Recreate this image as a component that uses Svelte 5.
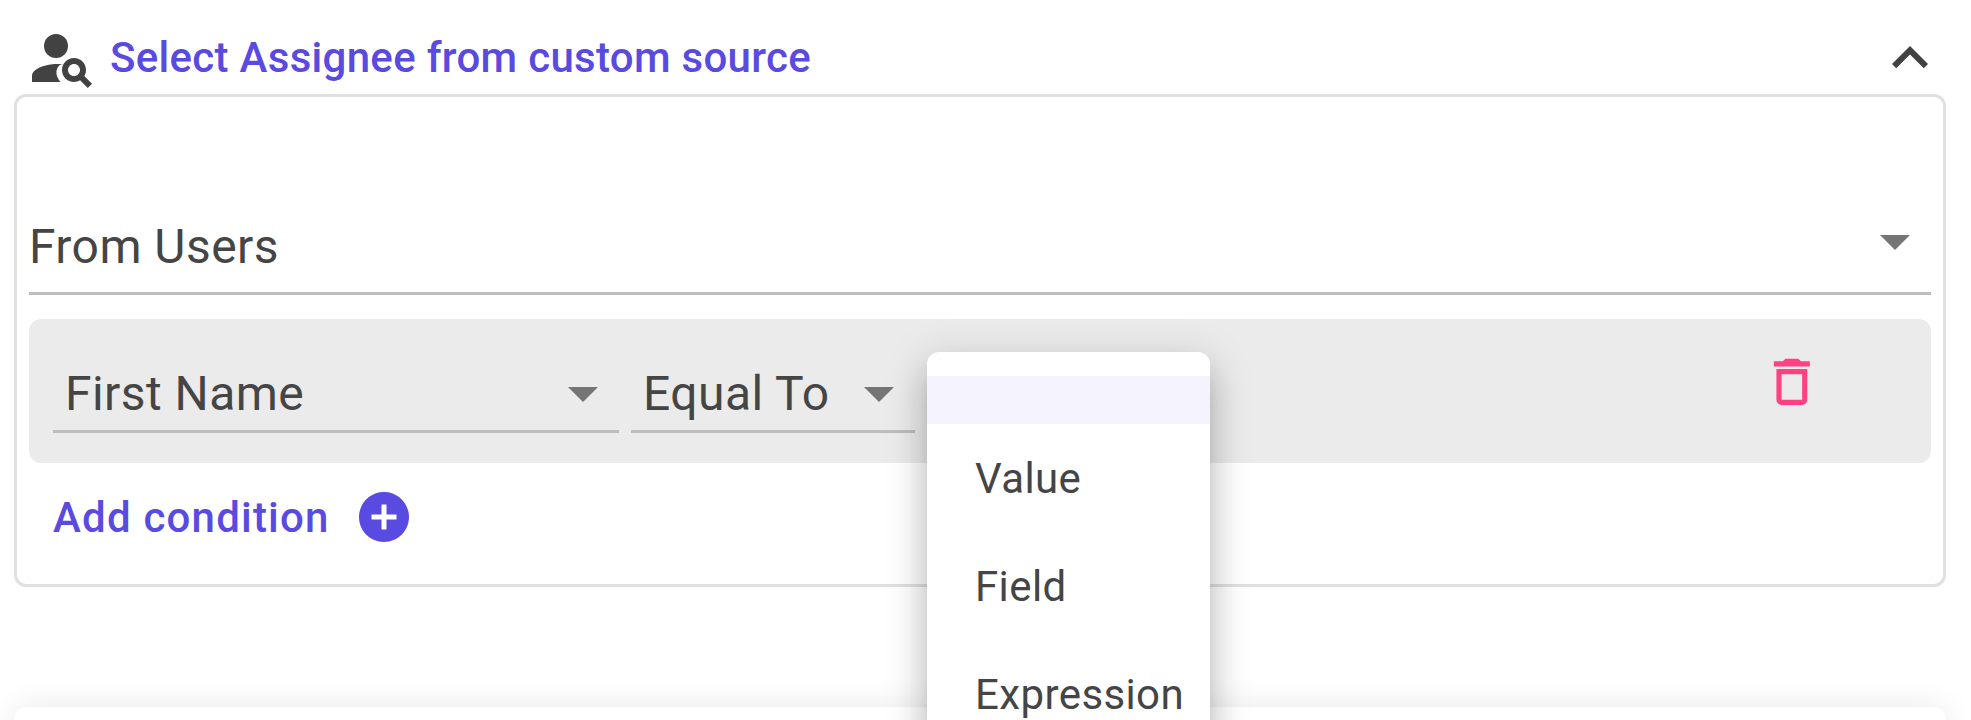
<script lang="ts">
	const options = ['Value', 'Field', 'Expression'];
	const arrowPath = 'M7 10l5 5 5-5z';
</script>

<div class="page">
	<header class="head">
		<svg class="icon" viewBox="0 0 24 24" aria-hidden="true">
			<circle cx="10" cy="8" r="4" />
			<path d="M10.35 14.01C7.62 13.91 2 15.27 2 18v2h9.54c-2.47-2.76-1.23-5.89.81-5.99z" />
			<path d="M19.43 18.02c.36-.59.57-1.28.57-2.02 0-2.21-1.79-4-4-4s-4 1.79-4 4 1.79 4 4 4c.74 0 1.43-.22 2.02-.57L20.59 22 22 20.59l-2.57-2.57zM16 18c-1.1 0-2-.9-2-2s.9-2 2-2 2 .9 2 2-.9 2-2 2z" />
		</svg>
		<h2>Select Assignee from custom source</h2>
		<svg class="icon chevron" viewBox="0 0 24 24" aria-hidden="true">
			<path d="M12 8l-6 6 1.41 1.41L12 10.83l4.59 4.58L18 14z" />
		</svg>
	</header>

	<section class="panel">
		<div class="select source">
			<span>From Users</span>
			<svg class="icon arrow" viewBox="0 0 24 24" aria-hidden="true"><path d={arrowPath} /></svg>
		</div>

		<div class="condition">
			<div class="select field">
				<span>First Name</span>
				<svg class="icon arrow" viewBox="0 0 24 24" aria-hidden="true"><path d={arrowPath} /></svg>
			</div>
			<div class="select operator">
				<span>Equal To</span>
				<svg class="icon arrow" viewBox="0 0 24 24" aria-hidden="true"><path d={arrowPath} /></svg>
			</div>
			<svg class="trash" viewBox="0 0 24 24" aria-hidden="true">
				<path d="M6 19c0 1.1.9 2 2 2h8c1.1 0 2-.9 2-2V7H6v12zM8 9h8v10H8V9zm7.5-5l-1-1h-5l-1 1H5v2h14V4z" />
			</svg>
		</div>

		<div class="add">
			<span>Add condition</span>
			<svg class="plus" viewBox="0 0 24 24" aria-hidden="true">
				<path d="M12 2C6.48 2 2 6.48 2 12s4.48 10 10 10 10-4.48 10-10S17.52 2 12 2zm5 11h-4v4h-2v-4H7v-2h4V7h2v4h4v2z" />
			</svg>
		</div>
	</section>

	<section class="next-card"></section>

	<ul class="menu">
		<li class="empty"></li>
		{#each options as option}
			<li>{option}</li>
		{/each}
	</ul>
</div>

<style>
	:global(body) {
		background: #fff;
	}

	.page {
		position: relative;
		height: 720px;
		overflow: hidden;
		padding: 22px 25px 0 14px;
		box-sizing: border-box;
		font-family: Roboto, sans-serif;
		color: #454545;
	}

	.head {
		display: flex;
		align-items: center;
		height: 72px;
		padding-left: 12px;
	}

	h2 {
		margin: 0 0 0 12px;
		font-size: 42px;
		font-weight: 500;
		line-height: 1.2;
		letter-spacing: 0.00714em;
		color: #594ae2;
		flex: 1;
	}

	.icon {
		width: 72px;
		height: 72px;
		flex: none;
		fill: #424242;
	}

	.panel {
		box-sizing: border-box;
		height: 493px;
		border: 3px solid #e0e0e0;
		border-radius: 12px;
		padding: 102px 12px 0;
	}

	.select {
		display: flex;
		align-items: center;
		justify-content: space-between;
		box-sizing: border-box;
		border-bottom: 3px solid #bdbdbd;
		font-size: 48px;
		letter-spacing: 0.00938em;
	}

	.source {
		height: 96px;
		padding-bottom: 9px;
	}

	.source span {
		padding-top: 10px;
	}

	.arrow {
		fill: #757575;
	}

	.condition {
		display: flex;
		align-items: flex-start;
		height: 144px;
		margin-top: 24px;
		padding: 37px 108px 0 24px;
		box-sizing: border-box;
		background: #ebebeb;
		border-radius: 12px;
	}

	.field {
		width: 566px;
		height: 77px;
		padding-left: 12px;
	}

	.operator {
		width: 284px;
		height: 77px;
		margin-left: 12px;
		padding-left: 12px;
	}

	.trash {
		width: 61.7px;
		height: 61.7px;
		margin: -5px 0 0 auto;
		fill: #ff4081;
	}

	.add {
		display: flex;
		align-items: center;
		height: 60px;
		margin-top: 24px;
		padding-left: 24px;
		font-size: 42px;
		font-weight: 500;
		color: #594ae2;
		letter-spacing: 0.02857em;
	}

	.plus {
		width: 60px;
		height: 60px;
		margin-left: 24px;
		fill: #594ae2;
	}

	.next-card {
		height: 200px;
		margin-top: 120px;
		background: #fff;
		border-radius: 12px;
		box-shadow: 0 -3px 30px rgba(0, 0, 0, 0.08);
	}

	.menu {
		position: absolute;
		left: 927px;
		top: 352px;
		width: 283px;
		margin: 0;
		padding: 24px 0;
		list-style: none;
		background: #fff;
		border-radius: 12px;
		box-shadow:
			0 15px 15px -9px rgba(0, 0, 0, 0.2),
			0 24px 30px 3px rgba(0, 0, 0, 0.14),
			0 9px 42px 6px rgba(0, 0, 0, 0.12);
		font-size: 42px;
		letter-spacing: 0.00938em;
	}

	.menu li {
		display: flex;
		align-items: center;
		height: 108px;
		padding: 0 48px;
		box-sizing: border-box;
	}

	.menu .empty {
		height: 48px;
		background: #f5f3fd;
	}
</style>
